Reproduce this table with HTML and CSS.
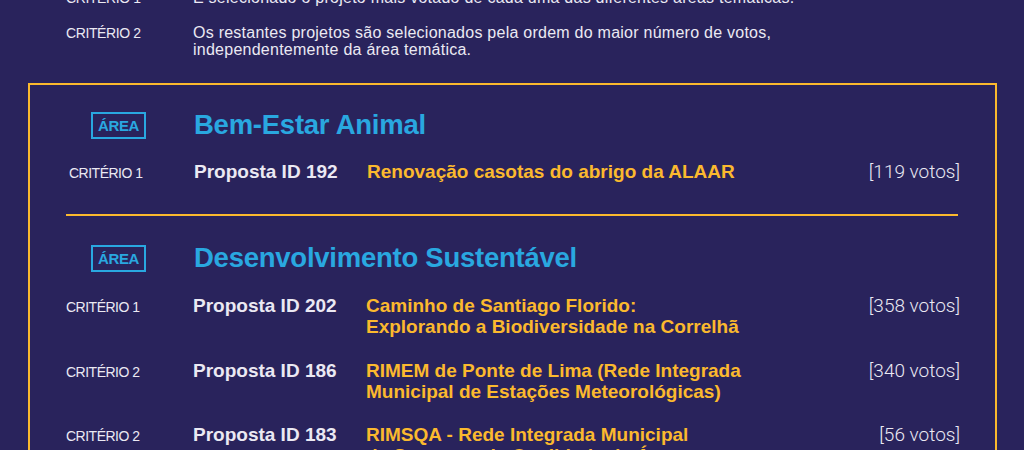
FILE: index.html
```html
<!DOCTYPE html>
<html lang="pt">
<head>
<meta charset="utf-8">
<title>Projetos selecionados</title>
<link rel="stylesheet" href="styles.css">
</head>
<body>
<div class="page">
  <section class="intro">
    <div class="intro-row">
      <span class="intro-label">CRITÉRIO 1</span>
      <p class="intro-text">É selecionado o projeto mais votado de cada uma das diferentes áreas temáticas.</p>
    </div>
    <div class="intro-row">
      <span class="intro-label">CRITÉRIO 2</span>
      <p class="intro-text">Os restantes projetos são selecionados pela ordem do maior número de votos,<br>independentemente da área temática.</p>
    </div>
  </section>

  <section class="results">
    <div class="area">
      <div class="area-head">
        <span class="badge">ÁREA</span>
        <h2 class="area-title">Bem-Estar Animal</h2>
      </div>
      <div class="row row-first">
        <span class="crit">CRITÉRIO 1</span>
        <span class="pid">Proposta ID 192</span>
        <span class="ptitle">Renovação casotas do abrigo da ALAAR</span>
        <span class="votes">[119 votos]</span>
      </div>
    </div>

    <hr class="divider">

    <div class="area">
      <div class="area-head">
        <span class="badge">ÁREA</span>
        <h2 class="area-title">Desenvolvimento Sustentável</h2>
      </div>
      <div class="row">
        <span class="crit">CRITÉRIO 1</span>
        <span class="pid">Proposta ID 202</span>
        <span class="ptitle">Caminho de Santiago Florido:<br>Explorando a Biodiversidade na Correlhã</span>
        <span class="votes">[358 votos]</span>
      </div>
      <div class="row">
        <span class="crit">CRITÉRIO 2</span>
        <span class="pid">Proposta ID 186</span>
        <span class="ptitle">RIMEM de Ponte de Lima (Rede Integrada<br>Municipal de Estações Meteorológicas)</span>
        <span class="votes">[340 votos]</span>
      </div>
      <div class="row">
        <span class="crit">CRITÉRIO 2</span>
        <span class="pid">Proposta ID 183</span>
        <span class="ptitle">RIMSQA - Rede Integrada Municipal<br>de Sensores de Qualidade da Água</span>
        <span class="votes">[56 votos]</span>
      </div>
    </div>
  </section>
</div>
</body>
</html>
```

FILE: styles.css
```css
html, body {
  margin: 0;
  padding: 0;
  background: #29235c;
  overflow: hidden;
}

body {
  font-family: "Liberation Sans", Arial, sans-serif;
  color: #ebe9f3;
}

.page {
  width: 1024px;
}

.intro {
  margin-top: -11px;
  padding-left: 66px;
  display: flex;
  flex-direction: column;
  gap: 17px;
}

.intro-row {
  display: grid;
  grid-template-columns: 127px 1fr;
  align-items: baseline;
}

.intro-label {
  font-size: 14px;
  letter-spacing: -0.4px;
  line-height: 17px;
}

.intro-text {
  margin: 0;
  font-size: 16px;
  line-height: 17px;
  letter-spacing: 0.25px;
}

.results {
  margin: 25px 27px 0 28px;
  border: 2px solid #fbb92e;
  border-bottom: none;
  padding: 27px 35px 40px 36px;
}

.area {
  display: flex;
  flex-direction: column;
  gap: 23px;
}

.area .row + .row {
  margin-top: -0.5px;
}

.area-head {
  display: flex;
  align-items: center;
  height: 27px;
}

.row-first {
  margin-top: -1px;
}

.badge {
  box-sizing: border-box;
  margin-left: 25px;
  width: 55px;
  height: 27px;
  border: 2px solid #29a8e0;
  color: #29a8e0;
  font-weight: bold;
  font-size: 15px;
  letter-spacing: -0.4px;
  display: flex;
  align-items: center;
  justify-content: center;
}

.area-title {
  margin: -2px 0 0 48px;
  color: #29a8e0;
  font-size: 27.5px;
  font-weight: bold;
  letter-spacing: -0.25px;
  line-height: 30px;
}

.row {
  display: grid;
  grid-template-columns: 127px 173px 1fr auto;
  align-items: baseline;
}

.row-first .crit {
  padding-left: 3px;
}

.row-first .pid,
.row-first .ptitle {
  padding-left: 1px;
}

.crit {
  font-size: 14px;
  letter-spacing: -0.5px;
  line-height: 21px;
}

.pid {
  font-size: 19px;
  font-weight: bold;
  letter-spacing: 0;
  line-height: 21px;
}

.ptitle {
  color: #fbb92e;
  font-size: 19px;
  font-weight: bold;
  letter-spacing: 0;
  line-height: 21px;
}

.votes {
  font-family: Roboto, "Liberation Sans", sans-serif;
  font-weight: 300;
  font-size: 19px;
  letter-spacing: 0;
  line-height: 21px;
  text-align: right;
}

.divider {
  margin: 30px 2px 29px 0;
  border: none;
  height: 2px;
  background: #fbb92e;
}
```
